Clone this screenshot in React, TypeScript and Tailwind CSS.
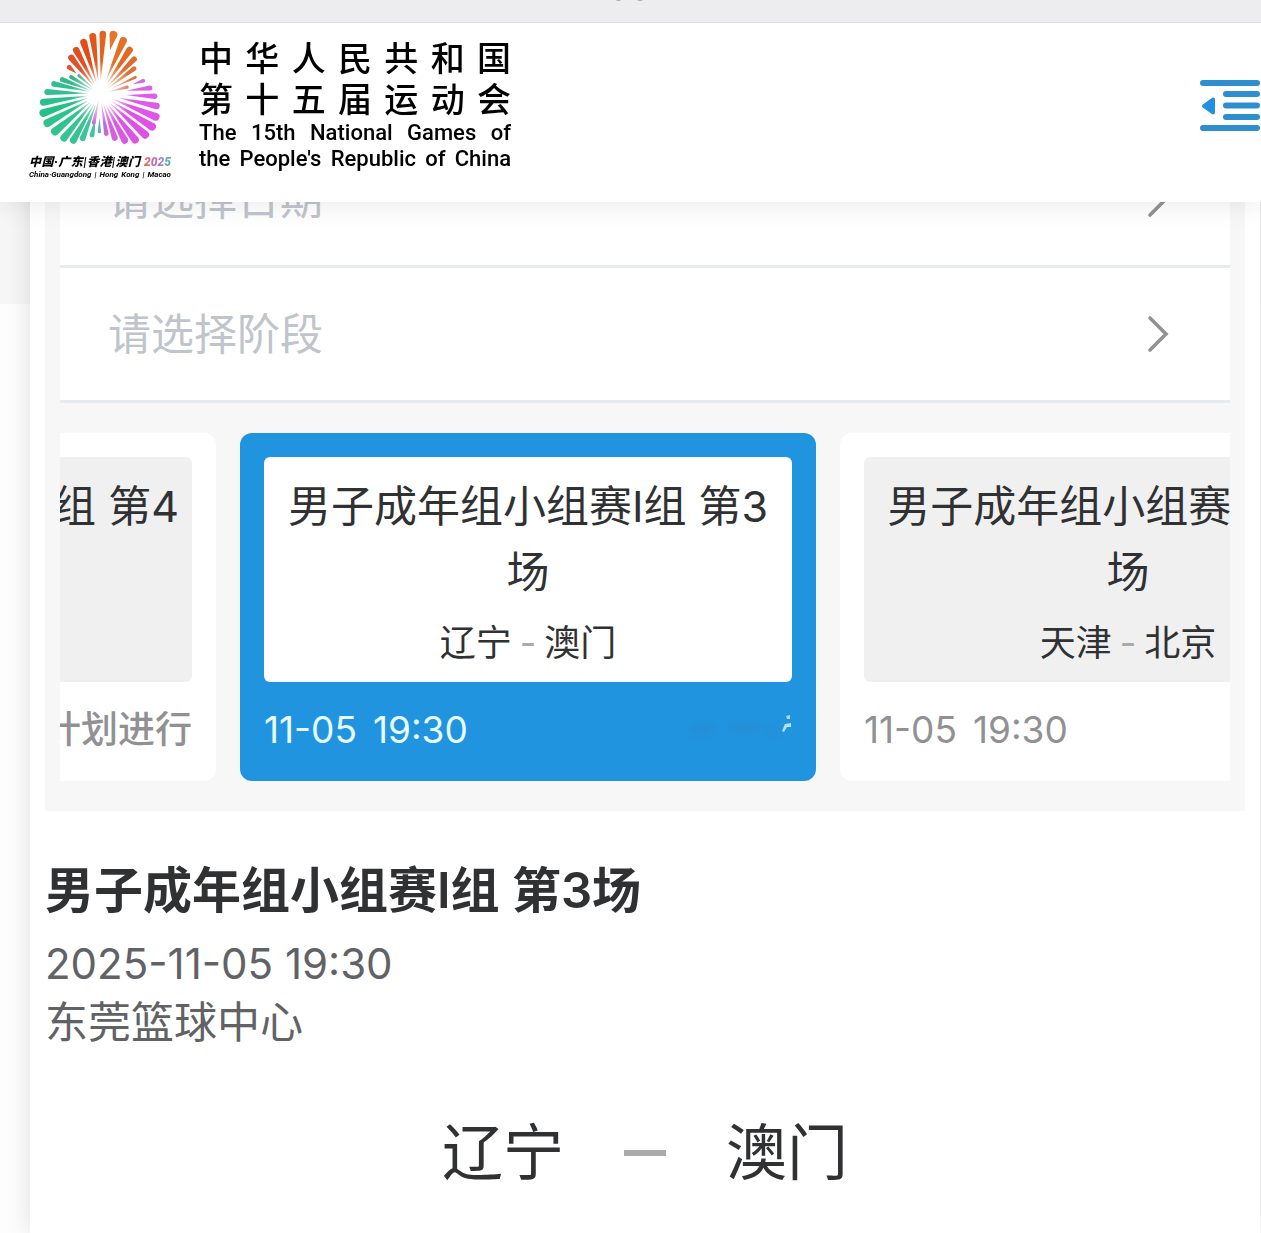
import React from "react";

type Petal = { tip: [number, number]; width: number; from: number; color: string };

const CENTER: [number, number] = [240, 222];

const PETALS: Petal[] = [
  { tip: [142, 137], width: 15, from: 0.72, color: "#dc5836" },
  { tip: [148, 106], width: 19, from: 0.2, color: "#e2502c" },
  { tip: [164, 82], width: 20, from: 0.2, color: "#e04e24" },
  { tip: [188, 57], width: 21, from: 0.2, color: "#e14c1c" },
  { tip: [217, 39], width: 21, from: 0.2, color: "#e2561c" },
  { tip: [249, 32], width: 20, from: 0.2, color: "#e2641e" },
  { tip: [283, 33], width: 24, from: 0.7, color: "#e5762c" },
  { tip: [314, 52], width: 22, from: 0.25, color: "#e36f22" },
  { tip: [334, 82], width: 20, from: 0.2, color: "#df6a24" },
  { tip: [348, 112], width: 17, from: 0.2, color: "#de6c2c" },
  { tip: [348, 142], width: 14, from: 0.2, color: "#dc7238" },
  { tip: [350, 170], width: 8, from: 0.3, color: "#dc7238" },
  { tip: [326, 200], width: 10, from: 0.3, color: "#d5683c" },
  { tip: [173, 164], width: 9, from: 0.3, color: "#3fae86" },
  { tip: [148, 168], width: 12, from: 0.2, color: "#38b68c" },
  { tip: [120, 176], width: 15, from: 0.2, color: "#34b98c" },
  { tip: [94, 190], width: 17, from: 0.2, color: "#32bd90" },
  { tip: [73, 216], width: 18, from: 0.2, color: "#2fbf90" },
  { tip: [60, 248], width: 21, from: 0.2, color: "#2abf8c" },
  { tip: [59, 283], width: 24, from: 0.2, color: "#26bf88" },
  { tip: [72, 315], width: 24, from: 0.2, color: "#2cc48c" },
  { tip: [96, 342], width: 24, from: 0.2, color: "#30c48c" },
  { tip: [125, 362], width: 22, from: 0.2, color: "#36c490" },
  { tip: [155, 370], width: 21, from: 0.2, color: "#38c292" },
  { tip: [185, 363], width: 18, from: 0.2, color: "#40c49c" },
  { tip: [215, 352], width: 15, from: 0.55, color: "#46c2a0" },
  { tip: [238, 340], width: 10, from: 0.6, color: "#5ab0b4" },
  { tip: [220, 314], width: 12, from: 0.2, color: "#d76ad8" },
  { tip: [375, 181], width: 12, from: 0.72, color: "#d66ce0" },
  { tip: [397, 203], width: 15, from: 0.5, color: "#dc62e4" },
  { tip: [412, 229], width: 17, from: 0.45, color: "#df5ce8" },
  { tip: [419, 260], width: 20, from: 0.3, color: "#e05aea" },
  { tip: [418, 295], width: 23, from: 0.2, color: "#e054e8" },
  { tip: [406, 326], width: 24, from: 0.2, color: "#df50e6" },
  { tip: [384, 352], width: 24, from: 0.2, color: "#df50e6" },
  { tip: [352, 368], width: 23, from: 0.2, color: "#dc54e4" },
  { tip: [319, 370], width: 21, from: 0.2, color: "#d95ae2" },
  { tip: [287, 362], width: 18, from: 0.2, color: "#d460e0" },
  { tip: [260, 348], width: 14, from: 0.2, color: "#c868d8" },
];

// teardrop that starts as a point near the center and ends in a round cap
function petalPath({ tip, width, from }: Petal) {
  const [cx, cy] = CENTER;
  const dx = tip[0] - cx;
  const dy = tip[1] - cy;
  const len = Math.hypot(dx, dy);
  const ux = dx / len;
  const uy = dy / len;
  const r = width / 2;
  const ex = tip[0] - ux * r;
  const ey = tip[1] - uy * r;
  const sx = cx + dx * from;
  const sy = cy + dy * from;
  return `M${sx} ${sy}L${ex - uy * r} ${ey + ux * r}A${r} ${r} 0 0 0 ${ex + uy * r} ${ey - ux * r}Z`;
}

const EmblemIcon = () => (
  <svg viewBox="54 30 372 345" className="h-[115px] w-[124px]" aria-hidden="true">
    <defs>
      <radialGradient id="glow" gradientUnits="userSpaceOnUse" cx="248" cy="218" r="95">
        <stop offset="0" stopColor="#fff" />
        <stop offset="0.3" stopColor="#fff" stopOpacity="0.7" />
        <stop offset="1" stopColor="#fff" stopOpacity="0" />
      </radialGradient>
    </defs>
    {PETALS.map((petal, index) => (
      <path key={index} d={petalPath(petal)} fill={petal.color} />
    ))}
    <circle cx="248" cy="218" r="95" fill="url(#glow)" />
  </svg>
);

const MenuIcon = () => (
  <svg viewBox="0 0 60 52" className="h-[52px] w-[60px]" fill="none" stroke="#2f8fce" strokeWidth="6" strokeLinecap="round" aria-hidden="true">
    <path d="M3 4H57M26 15H57M26 26.500H57M26 38H57M3 49H57" />
    <path d="M4 27L13 20.500V33.500Z" fill="#2190e0" stroke="#2190e0" strokeWidth="4" strokeLinejoin="round" />
  </svg>
);

const ChevronIcon = () => (
  <svg viewBox="0 0 24 40" className="pointer-events-none col-start-1 row-start-1 mr-[60px] h-10 w-6 self-center justify-self-end" fill="none" stroke="#929292" strokeWidth="3.600" strokeLinecap="round" aria-hidden="true">
    <path d="M4 4L20 20L4 36" />
  </svg>
);

const PickerRow = ({ placeholder }: { placeholder: string }) => (
  <div className="grid h-[135px] border-b-[3px] border-[#e6ebef] bg-white">
    <select
      aria-label={placeholder}
      className="col-start-1 row-start-1 w-full appearance-none bg-transparent pl-12 text-[43px] text-[#c0c4cc] outline-none"
    >
      <option>{placeholder}</option>
    </select>
    <ChevronIcon />
  </div>
);

type Match = {
  title: string;
  home?: string;
  away?: string;
  date?: string;
  time?: string;
  status?: string;
  active?: boolean;
};

const MATCHES: Match[] = [
  { title: "男子成年组小组赛H组 第4场", status: "计划进行" },
  { title: "男子成年组小组赛I组 第3场", home: "辽宁", away: "澳门", date: "11-05", time: "19:30", active: true },
  { title: "男子成年组小组赛I组 第4场", home: "天津", away: "北京", date: "11-05", time: "19:30" },
];

const MatchCard = ({ match }: { match: Match }) => (
  <button
    type="button"
    className={`flex w-[576px] shrink-0 flex-col rounded-xl p-6 ${
      match.active ? "bg-[#2194e0] text-[#e8fbff]" : "bg-white text-[#919195]"
    }`}
  >
    <span
      className={`flex h-[225px] w-full flex-col rounded-md px-3 py-4 text-center text-[#303133] ${
        match.active ? "bg-white" : "bg-[#f0f0f0]"
      }`}
    >
      <span className="text-[43px] leading-[66px]">{match.title}</span>
      {match.home && (
        <span className="mt-3 flex items-center justify-center gap-2 text-4xl leading-[52px]">
          {match.home}
          <span className="text-[#aaaaaa]">-</span>
          {match.away}
        </span>
      )}
    </span>
    <span className="mt-5 flex h-[55px] w-full items-center justify-between text-[37px]">
      <span className="flex gap-4">
        <span>{match.date}</span>
        <span>{match.time}</span>
      </span>
      {match.status && <span className="font-medium">{match.status}</span>}
      {match.active && (
        <svg viewBox="0 0 150 40" className="h-10 w-[150px]" aria-hidden="true">
          <defs>
            <filter id="soft">
              <feGaussianBlur stdDeviation="3" />
            </filter>
          </defs>
          <g filter="url(#soft)" fill="#2b86cc" opacity="0.35">
            <ellipse cx="60" cy="20" rx="14" ry="8" />
            <ellipse cx="102" cy="17" rx="18" ry="6" />
            <ellipse cx="132" cy="22" rx="10" ry="5" />
          </g>
          <path d="M144 6L148 5V9L145 9Z" fill="#a9d8f2" />
          <path d="M143 14L149 13V17L145 17L142 22L140 21Z" fill="#b5e0f6" />
        </svg>
      )}
    </span>
  </button>
);

const Header = () => (
  <header className="fixed inset-x-0 top-0 z-10 bg-white shadow-[0_4px_24px_rgba(0,0,0,0.08)]">
    <div className="flex h-[23px] justify-center border-b border-[#dedee0] bg-[#ededef]">
      <svg viewBox="0 0 32 4" className="h-1 w-8" aria-hidden="true">
        <path d="M1 0Q3 1 6 0M22 0Q25 1 28 0" fill="#777777" />
      </svg>
    </div>
    <div className="flex h-[179px] items-center justify-between pb-4 pl-[29px]">
      <a href="#" className="flex items-center gap-7 text-black">
        <span className="flex w-[142px] flex-col items-center">
          <EmblemIcon />
          <span className="mt-2 w-full font-[Roboto,'Noto_Sans_CJK_SC',sans-serif] text-[12px] leading-[18px] font-black whitespace-nowrap italic [text-align-last:justify]">
            中国·广东|香港|澳门{" "}
            <span className="bg-linear-to-r from-[#ea6a2a] via-[#b468d8] to-[#1ebf9c] bg-clip-text text-transparent">2025</span>
          </span>
          <span className="w-full font-[Roboto] text-[8px] leading-[8px] font-bold whitespace-nowrap italic [text-align-last:justify]">
            China·Guangdong | Hong Kong | Macao
          </span>
        </span>
        <span className="flex w-[312px] flex-col [text-align-last:justify]">
          <span className="text-[34px] leading-[41px] font-medium">中华人民共和国</span>
          <span className="text-[34px] leading-[41px] font-medium">第十五届运动会</span>
          <span className="font-[Roboto] text-[22px] leading-[26px] font-medium">The 15th National Games of</span>
          <span className="font-[Roboto] text-[22px] leading-[26px] font-medium">the People's Republic of China</span>
        </span>
      </a>
      <button type="button" aria-label="菜单" className="mr-px">
        <MenuIcon />
      </button>
    </div>
  </header>
);

export default function App() {
  return (
    <div className="min-h-screen bg-[linear-gradient(#f6f6f6_304px,#fdfdfd_304px)] font-[Inter,'Noto_Sans_CJK_SC',sans-serif]">
      <Header />
      <main className="mr-px ml-[30px] min-h-screen bg-white px-[15px] pt-[133px] shadow-[0_0_24px_rgba(0,0,0,0.12)]">
        <section className="bg-[#f7f7f7] px-[15px] pb-[30px]">
          <PickerRow placeholder="请选择日期" />
          <PickerRow placeholder="请选择阶段" />
          <div className="mt-[30px] overflow-hidden">
            <div className="-ml-[420px] flex gap-6">
              {MATCHES.map((match, index) => (
                <MatchCard key={index} match={match} />
              ))}
            </div>
          </div>
        </section>

        <section className="pt-12">
          <h1 className="text-[49px] leading-[64px] font-semibold text-[#303133]">男子成年组小组赛I组 第3场</h1>
          <p className="mt-3 text-[42px] leading-[58px] text-[#606266]">2025-11-05 19:30</p>
          <p className="text-[43px] leading-[58px] text-[#606266]">东莞篮球中心</p>
          <div className="mt-[62px] flex items-center justify-center gap-[60px] text-[61px] leading-[80px] text-[#303133]">
            <span>辽宁</span>
            <span className="h-1.5 w-[42px] bg-[#aaaaaa]" />
            <span>澳门</span>
          </div>
        </section>
      </main>
    </div>
  );
}
